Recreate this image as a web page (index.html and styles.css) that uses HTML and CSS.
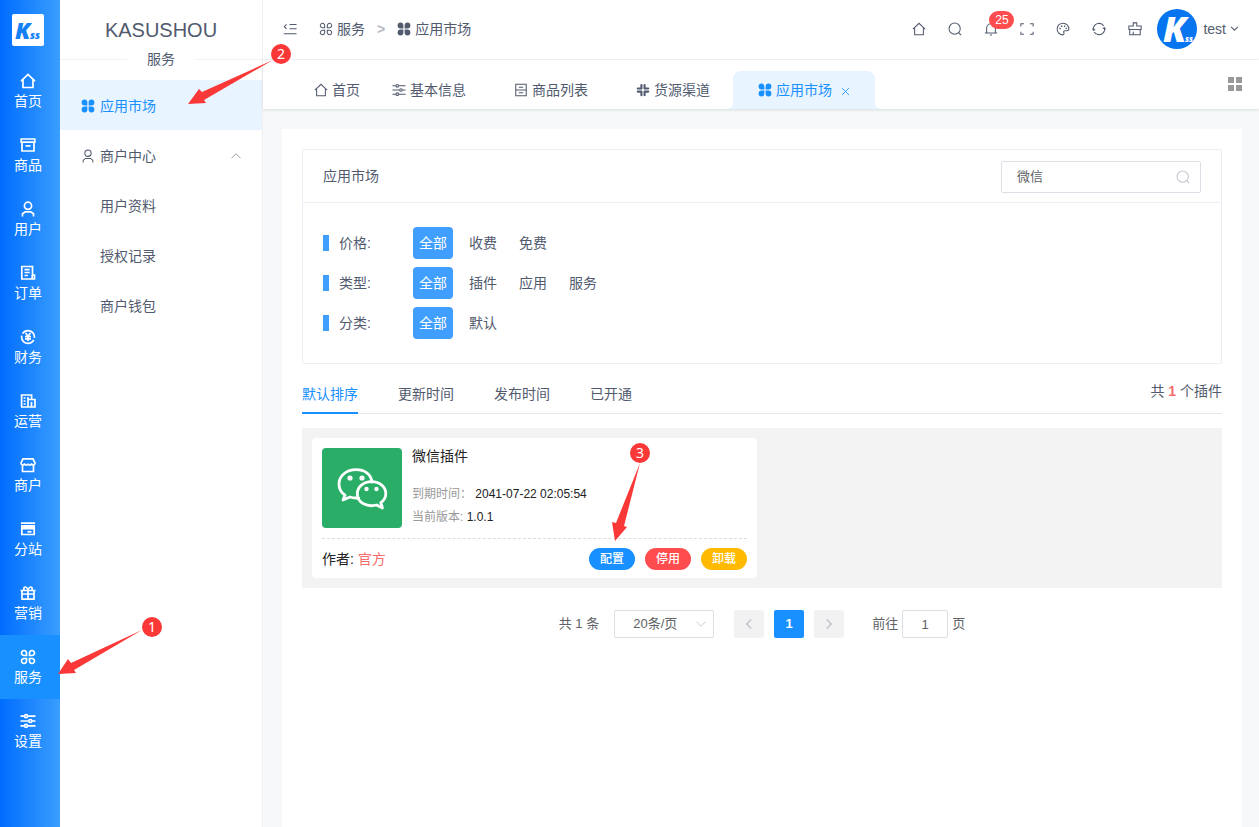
FILE: index.html
```html
<!DOCTYPE html>
<html lang="zh-CN">
<head>
<meta charset="utf-8">
<meta name="viewport" content="width=device-width, initial-scale=1">
<title>应用市场</title>
<link rel="stylesheet" href="styles.css">
</head>
<body>
<svg class="sprite" aria-hidden="true">
  <symbol id="home" viewBox="0 0 16 16"><path d="M1 8.2 8 1.5l7 6.7M3 6.5v8h10v-8"/></symbol>
  <symbol id="goods" viewBox="0 0 16 16"><path d="M1.2 2h13.6v3.2H1.2zM2 5.2h12V14H2zM5.5 8.8h5"/></symbol>
  <symbol id="user" viewBox="0 0 16 16"><circle cx="8" cy="4.8" r="3.6"/><path d="M2.5 15.5v-2.7l2.7-2h5.6l2.7 2v2.7"/></symbol>
  <symbol id="order" viewBox="0 0 16 16"><path d="M1.8 1.5h10.7v8.6h2V14H1.8zM4.5 4.6h5.2M4.5 7.5h5.2M4.5 10.5h3.4M12.2 10v3.8"/></symbol>
  <symbol id="money" viewBox="0 0 16 16"><circle cx="8" cy="8" r="6.4" stroke-dasharray="18 2.1" stroke-dashoffset="-3"/><path d="M5.6 4 8 7.2 10.400 4M8 7.2v4.8M5 7.600h6M5 9.900h6"/></symbol>
  <symbol id="office" viewBox="0 0 16 16"><path d="M1.6 14V2h10v4.500M1 14h14V6.5H8V14M3.6 5h2M7 5h2M3.6 8h2M3.6 11h2M11.5 9v5"/></symbol>
  <symbol id="shop" viewBox="0 0 16 16"><path d="M3 1.8h10l2 4.2c0 2.500-3.200 2.800-3.500.4C11 8.800 8.300 8.800 8 6.500 7.700 8.800 5 8.800 4.500 6.400 4.200 8.800 1 8.500 1 6zM2.500 8v6.500h11V8"/></symbol>
  <symbol id="site" viewBox="0 0 16 16"><path d="M1 2.200h14M1.800 5h12.400v8.500H1.800z"/><path class="solid" d="M1 4h14v4.500H1z"/><path d="M7.500 10.800h4"/></symbol>
  <symbol id="gift" viewBox="0 0 16 16"><path d="M.5 5.500h15M2 5.500h12v8.700H2zM8 5.500v8.700M2 9h12M8 5C6.500 1 3.500 1 3.800 5M8 5c1.500-4 4.500-4 4.200 0"/></symbol>
  <symbol id="service" viewBox="0 0 16 16"><path d="M6.500 6.500H4.300A2.500 2.500 0 1 1 6.500 4.200zM9.500 6.500V4.200a2.500 2.500 0 1 1 2.200 2.300zM6.500 9.500v2.200a2.500 2.500 0 1 1-2.200-2.200zM9.500 9.500h2.200a2.500 2.500 0 1 1-2.200 2.200z"/></symbol>
  <symbol id="apps" viewBox="0 0 16 16"><path class="solid" d="M7.300 7.300H4A3.300 3.300 0 1 1 7.300 4zM8.700 7.300V4A3.300 3.300 0 1 1 12 7.300zM7.300 8.700V12A3.300 3.300 0 1 1 4 8.700zM8.700 8.700H12A3.300 3.300 0 1 1 8.700 12z"/></symbol>
  <symbol id="settings" viewBox="0 0 16 16"><path d="M.5 3.200h4M7.500 3.200h8M.5 8h8M12 8h3.500M.5 12.800h4M7.500 12.800h8"/><circle cx="6" cy="3.200" r="1.500"/><circle cx="10.300" cy="8" r="1.500"/><circle cx="6" cy="12.800" r="1.500"/></symbol>
  <symbol id="list" viewBox="0 0 16 16"><path d="M2 1.500h12v13H2zM2 8h12M5.500 4.800h5M5.500 11.200h5"/></symbol>
  <symbol id="channel" viewBox="0 0 16 16"><path class="bars" d="M6.200 2.200v4.200M2 6.200h4.200M9.800 2.200v4.200M9.800 6.200H14M2 9.800h4.200M6.200 9.800v4.200M9.800 9.800v4.200M9.800 9.800H14"/></symbol>
  <symbol id="fold" viewBox="0 0 16 16"><path d="M4 2.800 1.500 5.300 4 7.800M7.500 2.800h8M7.500 7.600h8M.8 13.500h14.700"/></symbol>
  <symbol id="search" viewBox="0 0 16 16"><circle cx="7.600" cy="7.600" r="6.400"/><path d="m12.200 12.200 2.800 2.800"/></symbol>
  <symbol id="bell" viewBox="0 0 16 16"><path d="M3 12.300V7a5 5 0 0 1 10 0v5.300M1 12.500h14M6.800 14.800h2.400M8 2V.8"/></symbol>
  <symbol id="full" viewBox="0 0 16 16"><path d="M1 5V2h3.500M11.500 2H15v3M1 11v3h3.500M11.500 14H15v-3"/></symbol>
  <symbol id="palette" viewBox="0 0 16 16"><path d="M7.500 14.700A6.700 6.700 0 1 1 14.700 8c0 1.600-1 1.900-2.200 1.900h-2c-2 0-2 1.500-1.500 2.400.5 1.200-.2 2.400-1.500 2.400z"/><path class="solid" d="M3.800 6.600h1.600v1.600H3.800zM5.600 4h1.600v1.600H5.600zM9 4h1.600v1.600H9zM11 6.500h1.600v1.600H11z"/></symbol>
  <symbol id="refresh" viewBox="0 0 16 16"><path d="M1.600 9.500V7A6.500 6.500 0 0 1 13.500 4.600M14.400 6.500V9A6.500 6.500 0 0 1 2.500 11.400M.5 7.500l1.200 2 2-1M15.500 8.500l-1.200-2-2 1"/></symbol>
  <symbol id="brush" viewBox="0 0 16 16"><path d="M6 4.500V1h4v3.500h5v4H1v-4zM2 8.500v6h12v-6M6 14.500V11M1.500 8.500h13"/></symbol>
  <symbol id="up" viewBox="0 0 16 16"><path d="m2 11 6-6 6 6"/></symbol>
  <symbol id="down" viewBox="0 0 16 16"><path d="m2 5 6 6 6-6"/></symbol>
  <symbol id="left" viewBox="0 0 16 16"><path d="m11 2-6 6 6 6"/></symbol>
  <symbol id="right" viewBox="0 0 16 16"><path d="m5 2 6 6-6 6"/></symbol>
  <symbol id="close" viewBox="0 0 16 16"><path d="m2 2 12 12M14 2 2 14"/></symbol>
</svg>

<div class="app">
  <nav class="rail" aria-label="主导航">
    <svg class="rail-logo" viewBox="0 0 32 32" role="img" aria-label="Kss"><rect width="32" height="32" rx="2" fill="#fff"/><text x="3" y="25" class="logo-k">K</text><text x="18" y="25" class="logo-s">ss</text></svg>
    <a class="rail-item" href="#"><svg class="icon"><use href="#home"/></svg>首页</a>
    <a class="rail-item" href="#"><svg class="icon"><use href="#goods"/></svg>商品</a>
    <a class="rail-item" href="#"><svg class="icon"><use href="#user"/></svg>用户</a>
    <a class="rail-item" href="#"><svg class="icon"><use href="#order"/></svg>订单</a>
    <a class="rail-item" href="#"><svg class="icon"><use href="#money"/></svg>财务</a>
    <a class="rail-item" href="#"><svg class="icon"><use href="#office"/></svg>运营</a>
    <a class="rail-item" href="#"><svg class="icon"><use href="#shop"/></svg>商户</a>
    <a class="rail-item" href="#"><svg class="icon"><use href="#site"/></svg>分站</a>
    <a class="rail-item" href="#"><svg class="icon"><use href="#gift"/></svg>营销</a>
    <a class="rail-item active" href="#"><svg class="icon"><use href="#service"/></svg>服务</a>
    <a class="rail-item" href="#"><svg class="icon"><use href="#settings"/></svg>设置</a>
  </nav>

  <aside class="side">
    <h1 class="brand">KASUSHOU</h1>
    <div class="side-label">服务</div>
    <a class="menu-item active" href="#"><svg class="icon"><use href="#apps"/></svg>应用市场</a>
    <a class="menu-item" href="#"><svg class="icon"><use href="#user"/></svg>商户中心<svg class="icon chevron"><use href="#up"/></svg></a>
    <a class="menu-item sub" href="#">用户资料</a>
    <a class="menu-item sub" href="#">授权记录</a>
    <a class="menu-item sub" href="#">商户钱包</a>
  </aside>

  <div class="main">
    <header class="topbar">
      <button class="icon-btn fold" aria-label="折叠菜单"><svg class="icon"><use href="#fold"/></svg></button>
      <div class="crumbs">
        <a href="#"><svg class="icon"><use href="#service"/></svg>服务</a>
        <span class="sep">&gt;</span>
        <a href="#"><svg class="icon"><use href="#apps"/></svg>应用市场</a>
      </div>
      <div class="tools">
        <button class="icon-btn" aria-label="首页"><svg class="icon"><use href="#home"/></svg></button>
        <button class="icon-btn" aria-label="搜索"><svg class="icon"><use href="#search"/></svg></button>
        <button class="icon-btn" aria-label="通知"><svg class="icon"><use href="#bell"/></svg><span class="badge">25</span></button>
        <button class="icon-btn" aria-label="全屏"><svg class="icon"><use href="#full"/></svg></button>
        <button class="icon-btn" aria-label="主题"><svg class="icon"><use href="#palette"/></svg></button>
        <button class="icon-btn" aria-label="刷新"><svg class="icon"><use href="#refresh"/></svg></button>
        <button class="icon-btn" aria-label="清理缓存"><svg class="icon"><use href="#brush"/></svg></button>
      </div>
      <button class="account">
        <svg class="avatar" viewBox="0 0 40 40" aria-hidden="true"><circle cx="20" cy="20" r="20" fill="#0774f0"/><text x="6" y="33" class="avatar-k">K</text><text x="28" y="33" class="avatar-s">ss</text></svg>
        test<svg class="icon caret"><use href="#down"/></svg>
      </button>
    </header>

    <div class="tabbar">
      <nav class="tabs" aria-label="已打开页面">
        <a class="tab home" href="#"><svg class="icon"><use href="#home"/></svg>首页</a>
        <a class="tab" href="#"><svg class="icon"><use href="#settings"/></svg>基本信息</a>
        <a class="tab" href="#"><svg class="icon"><use href="#list"/></svg>商品列表</a>
        <a class="tab" href="#"><svg class="icon"><use href="#channel"/></svg>货源渠道</a>
        <a class="tab active" href="#"><svg class="icon"><use href="#apps"/></svg>应用市场<svg class="icon close"><use href="#close"/></svg></a>
      </nav>
      <button class="grid-btn" aria-label="标签操作"><i></i><i></i><i></i><i></i></button>
    </div>

    <main class="content">
      <section class="panel">
        <div class="panel-head">
          <h2>应用市场</h2>
          <label class="search"><input type="text" value="微信" aria-label="搜索插件"><svg class="icon"><use href="#search"/></svg></label>
        </div>
        <div class="filters">
          <div class="filter"><span class="filter-name">价格:</span><button class="tag on">全部</button><button class="tag">收费</button><button class="tag">免费</button></div>
          <div class="filter"><span class="filter-name">类型:</span><button class="tag on">全部</button><button class="tag">插件</button><button class="tag">应用</button><button class="tag">服务</button></div>
          <div class="filter"><span class="filter-name">分类:</span><button class="tag on">全部</button><button class="tag">默认</button></div>
        </div>
      </section>

      <div class="sortbar">
        <button class="sort on">默认排序</button>
        <button class="sort">更新时间</button>
        <button class="sort">发布时间</button>
        <button class="sort">已开通</button>
        <span class="total">共 <b>1</b> 个插件</span>
      </div>

      <div class="plugins">
        <article class="plugin">
          <div class="plugin-top">
            <svg class="wechat" viewBox="0 0 80 80" role="img" aria-label="微信">
              <path d="M50 34C49 26 42.500 21.700 34 21.700c-9.500 0-17 6-17 14.300 0 5 2.400 8.700 6 11.200L21 52l7-3c3 1.100 5.500 1.200 8.500.8"/>
              <path d="M49.500 33.700c8.200 0 14.300 5.200 14.300 11.700 0 4-1.900 7-5 9.300L60.500 60l-6-3c-9 2.500-19.200-2-19.200-11.300 0-6.700 6.200-12 14.200-12z"/>
              <g class="eyes"><circle cx="28" cy="30" r="2.600"/><circle cx="40" cy="30" r="2.600"/><circle cx="44.500" cy="41" r="2.200"/><circle cx="54.500" cy="41" r="2.200"/></g>
            </svg>
            <div class="plugin-info">
              <h3>微信插件</h3>
              <p><span>到期时间：</span> 2041-07-22 02:05:54</p>
              <p><span>当前版本: </span>1.0.1</p>
            </div>
          </div>
          <div class="plugin-foot">
            <span>作者: <em>官方</em></span>
            <div class="actions"><button class="pill blue">配置</button><button class="pill red">停用</button><button class="pill amber">卸载</button></div>
          </div>
        </article>
      </div>

      <div class="pager">
        <span class="pager-total">共 1 条</span>
        <label class="size"><select aria-label="每页条数"><option>20条/页</option></select><svg class="icon"><use href="#down"/></svg></label>
        <div class="pages">
          <button aria-label="上一页" disabled><svg class="icon"><use href="#left"/></svg></button>
          <button class="current">1</button>
          <button aria-label="下一页" disabled><svg class="icon"><use href="#right"/></svg></button>
        </div>
        <label class="jump">前往<input type="text" value="1">页</label>
      </div>
    </main>
  </div>
</div>

<svg class="notes" width="700" height="700" aria-hidden="true">
  <path d="M58 674 68 659l3 4 71-33-68 40 2 3z"/><circle cx="152" cy="627" r="10"/><text x="152" y="632">1</text>
  <path d="M188 104 199 89l3 3 71-32-69 40 2 3z"/><circle cx="281" cy="54" r="10"/><text x="281" y="59">2</text>
  <path d="M615 541 612 522l4 1 24-60-16 63 3 1z"/><circle cx="640" cy="453" r="10"/><text x="640" y="458">3</text>
</svg>
</body>
</html>
```
FILE: styles.css
```css
* { box-sizing: border-box; }
body {
  margin: 0;
  font: 14px/20px "Liberation Sans", "Noto Sans CJK SC", sans-serif;
  color: #515a6e;
  background: #f6f8f9;
}
a { color: inherit; text-decoration: none; }
button { padding: 0; border: 0; background: none; font: inherit; color: inherit; cursor: pointer; }
input, select { font: inherit; color: #606266; }
h1, h2, h3, p { margin: 0; font-weight: 400; }
.sprite { display: none; }
.icon { width: 14px; height: 14px; flex: none; fill: none; stroke: currentColor; stroke-width: 1.2; }
.solid { fill: currentColor; stroke: none; }
.bars { stroke-width: 2.4; stroke-linecap: round; }

.app { display: flex; min-height: 100vh; }

.rail {
  flex: 0 0 60px;
  display: flex;
  flex-direction: column;
  background: linear-gradient(90deg, #006cff, #399efd);
  color: #fff;
}
.rail-logo { width: 32px; height: 32px; margin: 14px 12px 13px; }
.logo-k { font: italic 800 23px "Open Sans", sans-serif; fill: #1380f5; }
.logo-s { font: italic 800 10px "Open Sans", sans-serif; fill: #1380f5; }
.rail-item {
  height: 64px;
  padding: 14px 4px 0 0;
  display: flex;
  flex-direction: column;
  align-items: center;
  gap: 2px;
}
.rail-item .icon { width: 16px; height: 16px; stroke-width: 1.7; }
.rail-item.active { background: #1890ff; }

.side { flex: 0 0 203px; background: #fff; border-right: 1px solid #f0f1f3; }
.brand { height: 49px; padding-top: 20px; font-size: 20px; line-height: 20px; text-align: center; }
.side-label { display: flex; align-items: center; gap: 20px; height: 20px; margin-bottom: 11px; }
.side-label::before, .side-label::after { content: ""; flex: 1; height: 1px; background: #f1f2f4; }
.menu-item { display: flex; align-items: center; gap: 5px; height: 50px; padding: 2px 20px 0 21px; }
.menu-item.active { background: #e8f4ff; color: #1890ff; }
.menu-item.sub { padding-left: 40px; }
.chevron { width: 12px; height: 12px; margin-left: auto; color: #909399; }

.main { flex: 1; min-width: 0; display: flex; flex-direction: column; }
.topbar { display: flex; align-items: center; height: 60px; padding: 0 20px 2px; background: #fff; border-bottom: 1px solid #f3f4f5; }
.icon-btn { position: relative; width: 36px; height: 36px; display: grid; place-items: center; }
.fold { width: 14px; margin-right: 22px; }
.crumbs { display: flex; align-items: center; gap: 12px; }
.crumbs a { display: flex; align-items: center; gap: 4px; }
.sep { color: #b4b8c0; font-weight: 700; }
.tools { display: flex; margin-left: auto; }
.badge {
  position: absolute;
  left: 16px;
  top: 0;
  width: 25px;
  height: 18px;
  border-radius: 9px;
  background: #ff4d4f;
  color: #fff;
  font-size: 12px;
  line-height: 18px;
}
.account { display: flex; align-items: center; gap: 4px; margin-left: 4px; }
.avatar { width: 40px; height: 40px; margin-right: 2px; }
.avatar-k { font: italic 800 35px "Open Sans", sans-serif; fill: #fff; }
.avatar-s { font: italic 800 8px "Open Sans", sans-serif; fill: #fff; }
.caret { width: 9px; height: 9px; stroke-width: 1.8; }

.tabbar { display: flex; justify-content: space-between; height: 49px; padding: 0 17px 0 35px; background: #fff; box-shadow: 0 1px 3px rgba(0, 21, 41, .12); }
.tabs { display: flex; align-items: flex-end; }
.tab { position: relative; display: flex; align-items: center; gap: 4px; width: 122px; height: 38px; padding-left: 16px; }
.tab.home { width: 78px; }
.tab.active { width: 142px; margin-left: -9px; padding-left: 25px; background: #e8f4ff; color: #1890ff; border-radius: 8px 8px 0 0; }
.tab.active::before, .tab.active::after { content: ""; position: absolute; bottom: 0; width: 6px; height: 6px; }
.tab.active::before { right: 100%; background: radial-gradient(circle at 0 0, transparent 6px, #e8f4ff 6px); }
.tab.active::after { left: 100%; background: radial-gradient(circle at 100% 0, transparent 6px, #e8f4ff 6px); }
.tab .close { width: 9px; height: 9px; margin: 2px 0 0 5px; stroke-width: 1.5; }
.grid-btn { display: grid; grid-template-columns: 6px 6px; gap: 2px; margin-top: 17px; height: 14px; }
.grid-btn i { width: 6px; height: 6px; background: #999; }

.content { flex: 1; margin: 20px 17px 0 19px; padding: 20px; background: #fff; }
.panel { border: 1px solid #ebeef5; border-radius: 2px; }
.panel-head { display: flex; align-items: center; justify-content: space-between; height: 53px; padding: 0 20px; border-bottom: 1px solid #ebeef5; }
.panel-head h2 { font-size: 14px; }
.search { display: flex; align-items: center; width: 200px; height: 32px; margin-top: 2px; padding: 0 10px 0 15px; border: 1px solid #dcdfe6; border-radius: 2px; color: #c0c4cc; }
.search input { flex: 1; min-width: 0; padding: 0; border: 0; outline: 0; font-size: 13px; }
.filters { padding: 20px; }
.filter { display: flex; align-items: center; gap: 10px; height: 40px; }
.filter-name { display: flex; align-items: center; gap: 10px; width: 80px; }
.filter-name::before { content: ""; width: 6px; height: 16px; background: #409eff; }
.tag { width: 40px; height: 32px; border-radius: 4px; }
.tag.on { background: #409eff; color: #fff; }

.sortbar { display: flex; gap: 40px; height: 40px; margin: 10px 0 14px; border-bottom: 1px solid #e4e7ed; }
.sort { height: 40px; padding-top: 2px; border-bottom: 2px solid transparent; }
.sort.on { border-color: #1890ff; color: #1890ff; }
.total { margin-left: auto; padding-top: 7px; }
.total b { color: #f56c6c; }

.plugins { display: grid; grid-template-columns: 1fr 1fr; gap: 10px; padding: 10px; background: #f3f3f3; }
.plugin { padding: 10px 10px 8px; background: #fff; border-radius: 4px; color: #222; }
.plugin-top { display: flex; gap: 10px; padding-bottom: 10px; border-bottom: 1px dashed #dcdcdc; }
.wechat { width: 80px; height: 80px; border-radius: 4px; background: #2aae67; fill: none; stroke: #fff; stroke-width: 2.8; stroke-linejoin: round; stroke-linecap: round; }
.eyes { fill: #fff; stroke: none; }
.plugin-info h3 { height: 35px; font-size: 14px; line-height: 16px; }
.plugin-info p { font-size: 12px; line-height: 23px; height: 22px; margin-bottom: 1px; }
.plugin-info p:last-child { margin-bottom: 0; }
.plugin-info span { color: #999; }
.plugin-foot { display: flex; align-items: center; justify-content: space-between; padding-top: 9px; height: 31px; }
.plugin-foot em { font-style: normal; color: #f56c6c; }
.actions { display: flex; gap: 10px; }
.pill { width: 46px; height: 22px; border-radius: 11px; color: #fff; font-size: 12px; line-height: 22px; font-weight: 500; }
.blue { background: #1890ff; }
.red { background: #ff4d4f; }
.amber { background: #ffba00; }

.pager { display: flex; align-items: center; justify-content: center; margin-top: 22px; font-size: 13px; color: #606266; }
.size { display: flex; align-items: center; width: 100px; height: 28px; margin: 0 20px 0 15px; padding: 0 6px 0 18px; border: 1px solid #dcdfe6; border-radius: 2px; color: #c0c4cc; }
.size select { flex: 1; min-width: 0; padding: 0; border: 0; background: none; appearance: none; }
.size .icon { width: 12px; height: 12px; }
.pages { display: flex; gap: 10px; }
.pages button { width: 30px; height: 28px; display: grid; place-items: center; border-radius: 2px; background: #f2f2f2; color: #c0c4cc; }
.pages .icon { width: 12px; height: 12px; stroke-width: 2; }
.pages .current { background: #1890ff; color: #fff; font-weight: 700; }
.jump { display: flex; align-items: center; gap: 4px; margin-left: 28px; }
.jump input { width: 46px; height: 28px; padding: 0; border: 1px solid #dcdfe6; border-radius: 2px; text-align: center; }

.notes { position: absolute; left: 0; top: 0; fill: #fb3838; pointer-events: none; }
.notes text { fill: #fff; font: 14px "Noto Sans", sans-serif; text-anchor: middle; }
```
